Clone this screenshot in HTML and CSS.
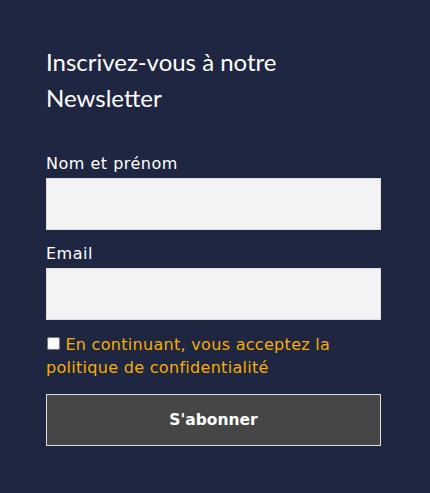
FILE: index.html
```html
<!DOCTYPE html>
<html lang="fr">
<head>
<meta charset="utf-8">
<link rel="stylesheet" href="styles.css">
</head>
<body>
<div class="panel">
  <h2 class="title">Inscrivez-vous à notre Newsletter</h2>
  <form class="form">
    <label class="label" for="nom">Nom et prénom</label>
    <input class="field" id="nom" type="text">
    <label class="label label-gap" for="email">Email</label>
    <input class="field" id="email" type="email">
    <div class="consent">
      <input class="check" type="checkbox" id="ok"><label for="ok"> En continuant, vous acceptez la politique de confidentialité</label>
    </div>
    <button class="submit" type="button">S'abonner</button>
  </form>
</div>
</body>
</html>
```
FILE: styles.css
```css
html, body {
  margin: 0;
  padding: 0;
  background: #1f2642;
}
.panel {
  width: 430px;
  height: 493px;
  box-sizing: border-box;
  padding: 44px 49px 0 46px;
}
.title {
  margin: 0 0 38px;
  width: 260px;
  font-family: Lato, sans-serif;
  font-weight: 400;
  font-size: 24px;
  line-height: 36px;
  color: #ffffff;
}
.form {
  display: flex;
  flex-direction: column;
}
.label {
  font-family: "DejaVu Sans", sans-serif;
  font-size: 16px;
  letter-spacing: 0.5px;
  line-height: 20px;
  color: #ffffff;
  margin-bottom: 4px;
}
.label-gap {
  margin-top: 14px;
}
.field {
  display: block;
  box-sizing: border-box;
  width: 335px;
  height: 52px;
  margin: 0;
  border: 1px solid #dddddd;
  background: #f3f3f3;
}
.consent {
  margin-top: 13px;
  font-family: "DejaVu Sans", sans-serif;
  font-size: 16px;
  letter-spacing: 0.3px;
  line-height: 23px;
  color: #f7ad00;
}
.check {
  width: 13px;
  height: 13px;
  margin: 0 0 0 1px;
}
.submit {
  margin-top: 15px;
  width: 335px;
  height: 52px;
  box-sizing: border-box;
  border: 1px solid #dddddd;
  background: #464646;
  color: #ffffff;
  font-family: "DejaVu Sans", sans-serif;
  font-weight: 700;
  font-size: 15.5px;
}
```
